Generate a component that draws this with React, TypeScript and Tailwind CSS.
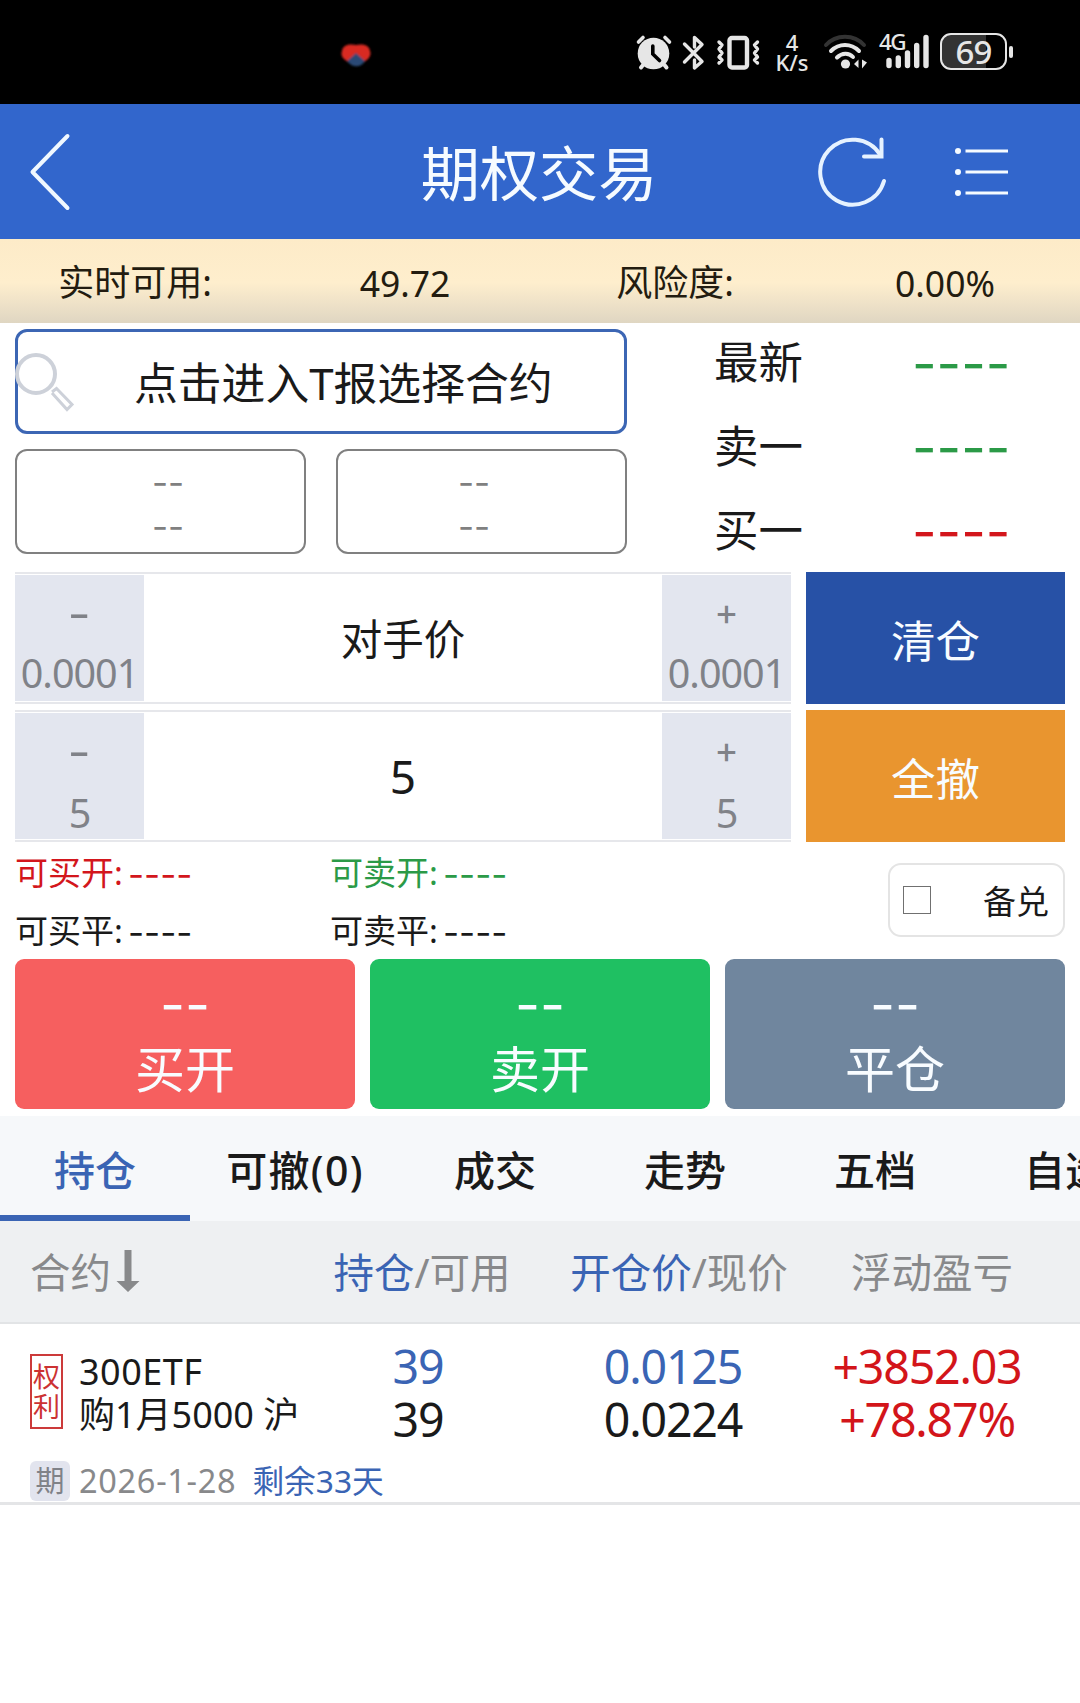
import React from "react";

function StatusBar() {
  return (
    <div className="flex h-[104px] bg-black text-[#e6e6e6]">
      <svg className="mt-[42px] ml-[339px] h-[28px] w-[34px] shrink-0" viewBox="0 0 34 28">
        <defs>
          <filter id="soft" x="-20%" y="-20%" width="140%" height="140%">
            <feGaussianBlur stdDeviation="1.3" />
          </filter>
        </defs>
        <g filter="url(#soft)">
          <path d="M3 9C4 2 12 2 17 3C22 2 30 2 31 9C33 14 28 19 24 20L17 14L10 20C5 18 1 14 3 9Z" fill="#d92a22" />
          <path d="M17 11L26 19C22 26 13 26 8 19Z" fill="#2b4a74" />
        </g>
      </svg>
      <svg className="mt-[34px] ml-[262px] h-[38px] w-[38px] shrink-0" viewBox="0 0 38 38" fill="none" strokeLinecap="round">
        <circle cx="18.500" cy="19.500" r="15.800" fill="#e6e6e6" />
        <path d="M3.500 8L8 3.500M34.500 8L30 3.500" stroke="#e6e6e6" strokeWidth="3.600" />
        <path d="M8 31L6 33.500M29.500 31L31.500 33.500" stroke="#e6e6e6" strokeWidth="4" />
        <path d="M17.800 12V20L24.500 26.500" stroke="#000" strokeWidth="3.600" />
      </svg>
      <svg className="mt-[34px] ml-[9px] h-[38px] w-[24px] shrink-0" viewBox="0 0 24 38" fill="none" stroke="#e6e6e6" strokeWidth="3.400" strokeLinecap="round" strokeLinejoin="round">
        <path d="M2.500 10L20 27.500L12.500 34V26M2.500 28L20 10.500L12.500 3.500V13" />
      </svg>
      <svg className="mt-[34px] ml-[10px] h-[38px] w-[44px] shrink-0" viewBox="0 0 44 38" fill="none" stroke="#e6e6e6" strokeWidth="3.600" strokeLinecap="round" strokeLinejoin="round">
        <rect x="13.500" y="4" width="17.500" height="29.500" rx="2.500" strokeWidth="4.400" />
        <path d="M3 8L6 11L3 15L6 19L3 23L6 26L3 29M41.500 8L38.500 11L41.500 15L38.500 19L41.500 23L38.500 26L41.500 29" strokeWidth="3.400" />
      </svg>
      <div className="mt-[32px] ml-[14px] flex w-[36px] shrink-0 flex-col items-center text-[22px] leading-[20px] font-medium">
        <span>4</span>
        <span>K/s</span>
      </div>
      <svg className="mt-[34px] ml-[12px] h-[38px] w-[48px] shrink-0" viewBox="0 0 48 38" fill="none" stroke="#e6e6e6" strokeWidth="4" strokeLinecap="round">
        <path d="M4 11C14 0 32 0 42 11" stroke="#333" />
        <path d="M9 17C17 9 29 9 37 17M15 23.500C20 18.500 27 18.500 31 23" />
        <circle cx="23.500" cy="30" r="4.600" fill="#e6e6e6" stroke="none" />
        <path d="M36.500 25.500V34L32 30ZM40 25.500V34.500L45 28.500Z" fill="#e6e6e6" stroke="none" />
      </svg>
      <div className="relative mt-[34px] ml-[9px] h-[38px] w-[52px] shrink-0">
        <span className="absolute -top-px left-0 text-[22.500px] leading-[18px] font-medium tracking-[-1.500px]">4G</span>
        <svg className="h-[38px] w-[52px]" viewBox="0 0 52 38" stroke="#e6e6e6" strokeWidth="5.400" strokeLinecap="round">
          <path d="M10 26.500V31.500M19.300 24V31.500M28.500 19V31.500M37.700 11.500V31.500M47 3.500V31.500" />
        </svg>
      </div>
      <div className="mt-[33px] ml-[9px] flex h-[37px] w-[67px] shrink-0 items-center justify-center rounded-[11px] border-[2.500px] border-[#e6e6e6] bg-[linear-gradient(90deg,#333_0_70%,#000_70%)] text-[33px] leading-[34px] font-medium tracking-[-1px]">
        69
      </div>
      <div className="mt-[46px] ml-[2px] h-[12px] w-[4px] shrink-0 rounded-[2px] bg-[#e6e6e6]" />
    </div>
  );
}

function Header() {
  return (
    <div className="grid h-[135px] grid-cols-[1fr_auto_1fr] items-center bg-[#3266cc] text-[#f6fbff]">
      <svg className="ml-[26px] h-[82px] w-[48px]" viewBox="0 0 48 82" fill="none" stroke="#f0f8ff" strokeWidth="4" strokeLinecap="round" strokeLinejoin="round">
        <path d="M41.500 5L6.500 41L41.500 77" />
      </svg>
      <h1 className="pt-[3px] pr-[2px] text-[59.200px] leading-[80px] font-normal">期权交易</h1>
      <div className="flex items-center justify-end pr-[72px]">
        <svg className="h-[72px] w-[72px]" viewBox="0 0 72 72" fill="none" stroke="#e6f2ff" strokeWidth="4" strokeLinecap="round">
          <path d="M67 45A32.500 32.500 0 1 1 63 18.500" />
          <path d="M64.500 3.500V20.500H47" />
        </svg>
        <svg className="ml-[63px] h-[54px] w-[56px]" viewBox="0 0 56 54" fill="#f6fbff">
          <circle cx="6" cy="6" r="3" />
          <circle cx="6" cy="27" r="3" />
          <circle cx="6" cy="48" r="3" />
          <path d="M13.500 4.500H56V7.500H13.500ZM13.500 25.500H56V28.500H13.500ZM13.500 46.500H56V49.500H13.500Z" />
        </svg>
      </div>
    </div>
  );
}

function Funds() {
  return (
    <div className="grid h-[84px] grid-cols-4 items-center bg-[linear-gradient(180deg,#fdebc8_0%,#feeecd_52%,#efe2c8_76%,#dfd6c2_100%)] pt-[3px] text-center text-[36px] leading-[50px] text-[#231c10]">
      <span>实时可用:</span>
      <span className="text-[35.500px]">49.72</span>
      <span>风险度:</span>
      <span className="text-[35.500px]">0.00%</span>
    </div>
  );
}

function LegBox({ side }: { side: "left" | "right" }) {
  return (
    <div
      className={
        "flex h-[105px] w-[291px] flex-col items-center justify-center rounded-[12px] border-2 border-[#808080] pt-[4px] font-[Inter] text-[35px] leading-[44px] text-[#808080] " +
        (side === "left" ? "pl-[15px]" : "pr-[15px]")
      }
    >
      <span>--</span>
      <span>--</span>
    </div>
  );
}

function Quote({ label, tone }: { label: string; tone: string }) {
  return (
    <div className="flex h-[84px] shrink-0 items-center">
      <span className="w-[198px] text-[44.500px] leading-[60px]">{label}</span>
      <span className={"pt-[4px] font-[Inter] text-[53.500px] leading-[60px] " + tone}>----</span>
    </div>
  );
}

function ContractArea() {
  return (
    <div className="flex h-[231px] px-[15px] pt-[6px]">
      <div className="flex w-[612px] flex-col gap-[15px]">
        <div className="flex h-[105px] items-center rounded-[12px] border-[3px] border-[#3c66b4]">
          <svg className="-ml-[3px] h-[64px] w-[60px] shrink-0" viewBox="0 0 60 64" fill="none" stroke="#cdd1d9">
            <circle cx="21" cy="24" r="19" strokeWidth="4" />
            <path d="M37 42L41.500 38.500L57 54.500L52 59.500L37 43" strokeWidth="3" />
          </svg>
          <span className="ml-[59px] pt-[2px] text-[43.800px] leading-[60px] whitespace-nowrap">点击进入T报选择合约</span>
        </div>
        <div className="flex justify-between">
          <LegBox side="left" />
          <LegBox side="right" />
        </div>
      </div>
      <div className="-mt-[9px] ml-[87px] flex flex-col">
        <Quote label="最新" tone="text-[#2b9a47]" />
        <Quote label="卖一" tone="text-[#2b9a47]" />
        <Quote label="买一" tone="text-[#d3161c]" />
      </div>
    </div>
  );
}

function StepButton({ sign, step, pad }: { sign: string; step: string; pad: string }) {
  return (
    <button className="flex h-[126px] w-[129px] flex-col items-center bg-[#e3e6ef] text-[#808288]">
      <span
        className={
          "font-[Inter] leading-[48px] " + (sign === "-" ? "mt-[15px] scale-x-115 text-[44px]" : "mt-[13px] text-[37px]")
        }
      >
        {sign}
      </span>
      <span className={"text-[39.500px] leading-[44px] tracking-[-1px] " + pad}>{step}</span>
    </button>
  );
}

function Stepper({ value, step, action, size, color, padLeft, padRight }: { value: string; step: string; action: string; size: string; color: string; padLeft: string; padRight: string }) {
  return (
    <div className="flex h-[132px] justify-between">
      <div className="flex w-[776px] items-center justify-between border-y-2 border-[#e6e7eb]">
        <StepButton sign="-" step={step} pad={padLeft} />
        <span className={"leading-[60px] " + size}>{value}</span>
        <StepButton sign="+" step={step} pad={padRight} />
      </div>
      <button className={"w-[259px] pt-[5px] text-[44.500px] leading-[60px] text-[#f8fcff] " + color}>{action}</button>
    </div>
  );
}

function Available({ label, tone }: { label: string; tone: string }) {
  return (
    <div className={"flex h-[58px] w-[315px] items-center pt-[3px] text-[33px] leading-[40px] " + tone}>
      <span className="w-[113px] whitespace-nowrap">{label}:</span>
      <span className="pt-[2px] font-[Inter] text-[35px]">----</span>
    </div>
  );
}

function Limits() {
  return (
    <div className="flex h-[117px] justify-between px-[15px]">
      <div className="grid grid-cols-[315px_315px] content-start">
        <Available label="可买开" tone="text-[#d3161c]" />
        <Available label="可卖开" tone="text-[#2b9a47]" />
        <Available label="可买平" tone="text-[#1a1a1a]" />
        <Available label="可卖平" tone="text-[#1a1a1a]" />
      </div>
      <label className="mt-[21px] flex h-[74px] w-[177px] items-center justify-between rounded-[13px] border-2 border-[#e4e4e4] pr-[14px] pl-[13px] text-[33px] leading-[40px]">
        <span className="h-[28px] w-[28px] border-[1.500px] border-[#707070]" />
        <span className="pt-[3px]">备兑</span>
      </label>
    </div>
  );
}

function OrderButton({ label, color }: { label: string; color: string }) {
  return (
    <button className={"flex h-[150px] w-[340px] flex-col items-center rounded-[9px] text-[#f8fcff] " + color}>
      <span className="mt-[15px] font-[Inter] text-[54.500px] leading-[60px]">--</span>
      <span className="mt-[5px] text-[50px] leading-[60px]">{label}</span>
    </button>
  );
}

const tabs = ["持仓", "可撤(0)", "成交", "走势", "五档", "自选"];

function Tabs() {
  return (
    <div className="mt-[7px] grid h-[105px] grid-cols-[190px_210px_190px_190px_190px_190px] overflow-hidden bg-[#f6f8fa] text-center text-[41px] leading-[60px] font-medium">
      {tabs.map((t, i) => (
        <div
          key={t}
          className={
            "border-b-[6px] pt-[24px] whitespace-nowrap " +
            (i === 0 ? "border-[#3a64b4] text-[#3a64b4]" : "border-transparent") +
            (i === 1 ? " tracking-[1.300px]" : "")
          }
        >
          {t}
        </div>
      ))}
    </div>
  );
}

function Positions() {
  return (
    <div>
      <div className="grid h-[103px] grid-cols-[294px_256px_258px_248px] items-center border-b-2 border-[#e2e4e6] bg-[#eef0f2] pt-[2px] text-center text-[40.500px] leading-[60px] text-[#88898b]">
        <div className="flex items-center pl-[30px]">
          合约
          <svg className="-mt-[4px] ml-[5px] h-[42px] w-[24px]" viewBox="0 0 24 42" fill="#88898b">
            <path d="M8.500 0H15.500V31H23.500L12 42L0.500 31H8.500Z" />
          </svg>
        </div>
        <div><span className="text-[#3a64b4]">持仓</span>/可用</div>
        <div><span className="text-[#3a64b4]">开仓价</span>/现价</div>
        <div>浮动盈亏</div>
      </div>
      <div className="flex h-[181px] flex-col border-b-[3px] border-[#e4e5e7]">
        <div className="grid h-[137px] grid-cols-[294px_248px_262px_246px] pt-[16px] text-center text-[46.500px] leading-[53px] tracking-[-1.200px]">
          <div className="flex pt-[14px] pl-[30px] tracking-normal">
            <div className="flex h-[75px] w-[33px] shrink-0 flex-col items-center justify-center border-2 border-[#cc3a3a] text-[27px] leading-[30px] text-[#cc3232]">
              <span>权</span>
              <span>利</span>
            </div>
            <div className="-mt-[4px] ml-[16px] flex flex-col text-left text-[36px] leading-[43px] whitespace-nowrap">
              <span className="tracking-[0.500px]">300ETF</span>
              <span>购1月5000 沪</span>
            </div>
          </div>
          <div>
            <div className="text-[#3a64b4]">39</div>
            <div>39</div>
          </div>
          <div>
            <div className="text-[#3a64b4]">0.0125</div>
            <div>0.0224</div>
          </div>
          <div className="text-[#d3151a]">
            <div>+3852.03</div>
            <div>+78.87%</div>
          </div>
        </div>
        <div className="flex items-center pl-[30px] text-[32.500px] leading-[40px] whitespace-nowrap">
          <span className="flex h-[40px] w-[40px] items-center justify-center rounded-[6px] bg-[#e2e4ee] text-[29px] text-[#808288]">期</span>
          <span className="ml-[9px] tracking-[0.700px] text-[#88898b]">2026-1-28</span>
          <span className="ml-[16px] text-[31.700px] text-[#3a64b4]">剩余33天</span>
        </div>
      </div>
    </div>
  );
}

export default function App() {
  return (
    <div className="flex h-[1703px] w-[1080px] flex-col overflow-hidden bg-white font-['Noto_Sans','Noto_Sans_CJK_SC',sans-serif] text-[#1a1a1a]">
      <StatusBar />
      <Header />
      <Funds />
      <ContractArea />
      <div className="mt-[18px] flex flex-col gap-[6px] px-[15px]">
        <Stepper value="对手价" step="0.0001" action="清仓" size="text-[41.500px] pt-[2px]" color="bg-[#2751a6]" padLeft="mt-[13px]" padRight="mt-[15px]" />
        <Stepper value="5" step="5" action="全撤" size="text-[46px]" color="bg-[#e9952f]" padLeft="mt-[15px]" padRight="mt-[17px]" />
      </div>
      <Limits />
      <div className="flex justify-between px-[15px]">
        <OrderButton label="买开" color="bg-[#f65f5f]" />
        <OrderButton label="卖开" color="bg-[#1fc062]" />
        <OrderButton label="平仓" color="bg-[#70869e]" />
      </div>
      <Tabs />
      <Positions />
    </div>
  );
}
